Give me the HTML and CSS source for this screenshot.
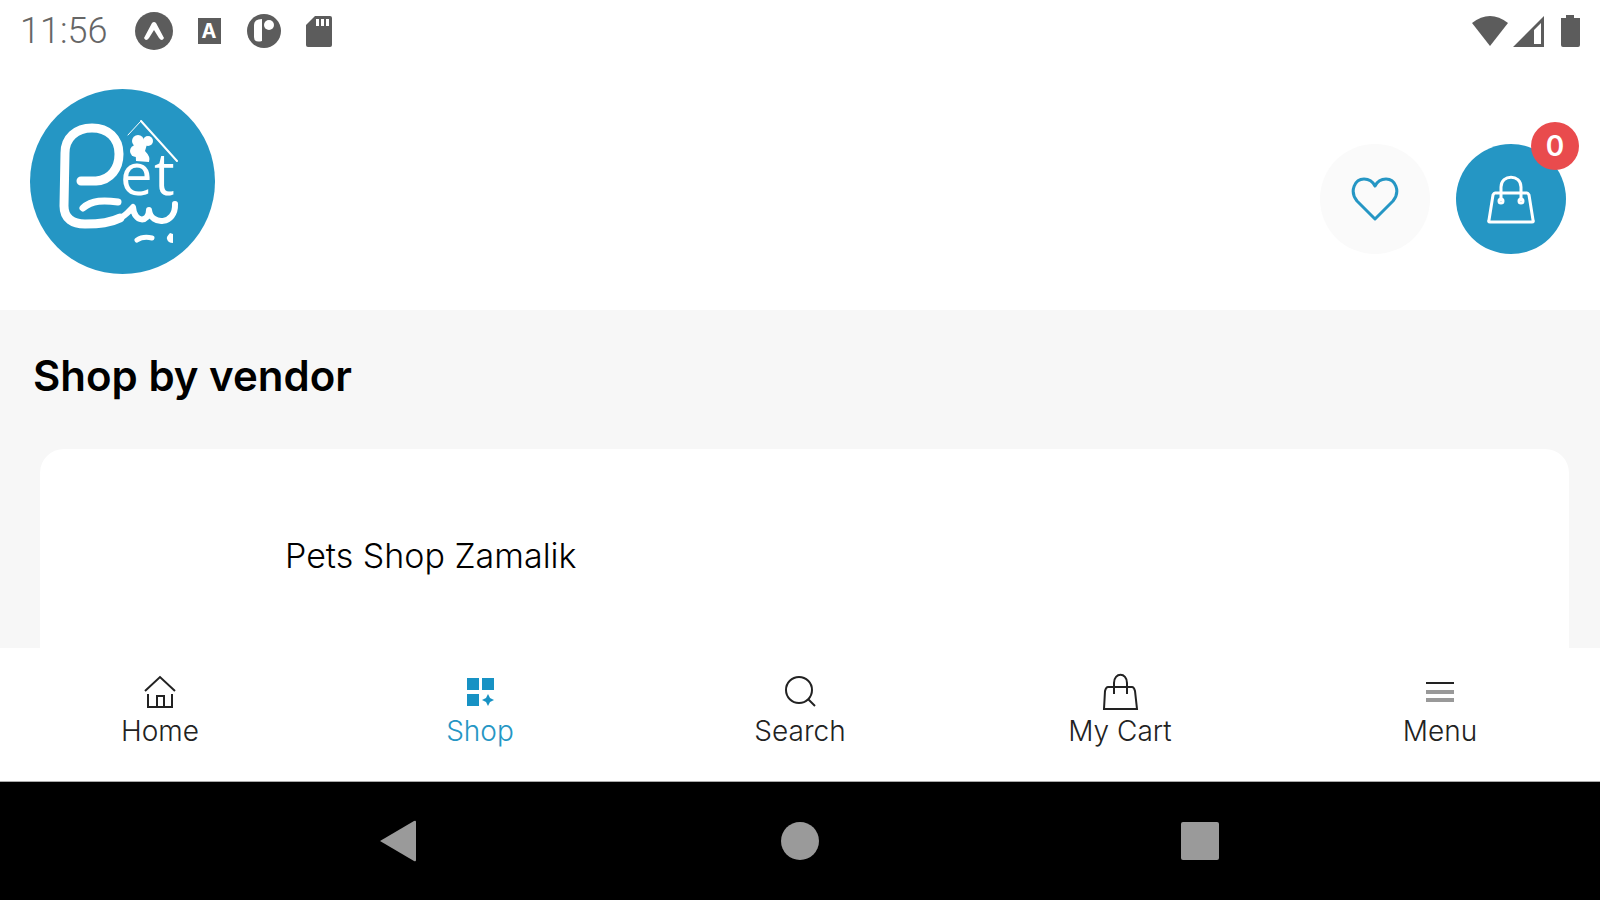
FILE: index.html
```
<!DOCTYPE html>
<html lang="en">
<head>
    <meta charset="UTF-8">
    <meta name="viewport" content="width=device-width, initial-scale=1.0">
    <title>Pet Beit</title>
    <link rel="stylesheet" href="styles.css">
</head>
<body>
    <!-- Status bar -->
    <div class="status-bar">
        <span class="time">11:56</span>
        <div class="status-icons">
            <svg viewBox="0 0 38 38"><circle cx="19" cy="19" r="19"/><path class="cut" d="M9 26L17 11Q19 9 21 11L29 26Q27 30 24 26L19 18L14 26Q11 30 9 26Z"/></svg>
            <svg viewBox="0 0 38 38"><path d="M8 6H31V32H8Z"/><text class="cut icon-letter" x="19" y="26" text-anchor="middle">A</text></svg>
            <svg viewBox="0 0 38 38"><circle cx="19" cy="19" r="17"/><path class="cut" d="M17 7V29Q9 31 9 25V13Q9 7 17 7Z"/><circle class="cut" cx="24" cy="13" r="5"/></svg>
            <svg viewBox="0 0 38 38"><path d="M15 4H30Q32 4 32 6V33Q32 35 30 35H8Q6 35 6 33V13Z"/><path class="cut" d="M16 7H19V14H16ZM21 7H24V14H21ZM26 7H29V14H26Z"/></svg>
        </div>
        <div class="system-icons">
            <svg viewBox="0 0 38 38"><path d="M1 11Q19 -3 37 11L19 34Z"/></svg>
            <svg viewBox="0 0 38 38"><path fill-rule="evenodd" d="M2 35L33 4V35ZM23 18V32H30V11Z"/></svg>
            <svg viewBox="0 0 38 38"><path d="M15 3H23V6H29V33Q29 35 27 35H12Q10 35 10 33V6H15Z"/></svg>
        </div>
    </div>

    <!-- Header -->
    <header class="header">
        <a href="#" class="logo" aria-label="Pet Beit">
            <svg viewBox="0 0 185 185">
                <circle cx="92.5" cy="92.5" r="92.5" fill="#2596c4"/>
                <g fill="none" stroke="#fff" stroke-linecap="round" stroke-linejoin="round">
                    <path stroke-width="9" d="M51 92H66C81 91 89 79 89 65C89 49 78 39 62 39C46 39 35 49 35 64L34 117C34 130 43 135 55 135C70 135 80 134 90 129"/>
                    <path stroke-width="6" d="M88 130C96 127 99 122 103 118C104 134 119 134 119 121C121 137 146 136 145 115"/>
                    <path stroke-width="7" d="M53 119C62 111 74 111 88 113"/>
                    <path stroke-width="5" d="M107 151Q113 147 122 149"/>
                    <path stroke-width="1" d="M98 46L111 32"/>
                    <path stroke-width="2" d="M111 32L147 72"/>
                </g>
                <g fill="#fff">
                    <circle cx="108" cy="52" r="6"/>
                    <circle cx="118" cy="52" r="5"/>
                    <circle cx="106" cy="62" r="6"/>
                    <path d="M105 52H118L115 62Q121 68 119 73L106 72Z"/>
                    <path d="M140 144Q136 148 137 150Q138 154 143 154V145Z"/>
                    <text class="logo-text" x="90 124" y="106">et</text>
                </g>
            </svg>
        </a>
        <div class="actions">
            <button class="round-button" aria-label="Wishlist">
                <svg viewBox="0 0 50 50"><path d="M25 45L7 27C-1 17 5 5 14 5C19 5 23 8 25 12C27 8 31 5 36 5C45 5 51 17 43 27Z"/></svg>
            </button>
            <button class="round-button cart" aria-label="Cart">
                <svg viewBox="0 0 50 50"><path d="M9 19H41Q42 19 43 21L47 46Q48 48 46 48H4Q2 48 3 46L7 21Q8 19 9 19ZM15 27V13C15 0 35 0 35 13V27"/><circle cx="15" cy="27" r="2"/><circle cx="35" cy="27" r="2"/></svg>
                <span class="badge">0</span>
            </button>
        </div>
    </header>

    <!-- Vendors -->
    <main class="content">
        <h1>Shop by vendor</h1>
        <a href="#" class="vendor-card">Pets Shop Zamalik</a>
    </main>

    <!-- Tabs -->
    <nav class="tabs">
        <a href="#" class="tab">
            <svg viewBox="0 0 40 40"><path d="M5 20L20 6L35 20M8 23V36H32V23M17 36V25H24V36"/></svg>
            Home
        </a>
        <a href="#" class="tab active">
            <svg viewBox="0 0 40 40"><path class="solid" d="M7 7H19V19H7ZM22 7H34V19H22ZM7 23H19V35H7ZM28 23L30 27L34 29L30 31L28 35L26 31L22 29L26 27Z"/></svg>
            Shop
        </a>
        <a href="#" class="tab">
            <svg viewBox="0 0 40 40"><circle cx="19" cy="19" r="13"/><path d="M28 28L35 35"/></svg>
            Search
        </a>
        <a href="#" class="tab">
            <svg viewBox="0 0 40 40"><path d="M8 16H32Q34 16 35 20L37 38H4L5 20Q6 16 8 16ZM14 23V12C14 1 27 1 27 12V23"/></svg>
            My Cart
        </a>
        <a href="#" class="tab">
            <svg viewBox="0 0 40 40"><path d="M6 12H34"/><path class="faded" d="M6 21H34M6 29H34"/></svg>
            Menu
        </a>
    </nav>

    <!-- System navigation -->
    <div class="system-nav">
        <button aria-label="Back"><svg viewBox="0 0 44 44"><path d="M2 22L36 2Q38 1 38 3V41Q38 43 36 42Z"/></svg></button>
        <button aria-label="Home screen"><svg viewBox="0 0 44 44"><circle cx="22" cy="22" r="19"/></svg></button>
        <button aria-label="Recent apps"><svg viewBox="0 0 44 44"><rect x="3" y="3" width="38" height="38" rx="2"/></svg></button>
    </div>
</body>
</html>
```

FILE: styles.css
```
* {
    box-sizing: border-box;
}
body {
    margin: 0;
    height: 100vh;
    display: flex;
    flex-direction: column;
    background: white;
    color: black;
    font-family: Inter, "Open Sans", sans-serif;
}
a {
    color: inherit;
    text-decoration: none;
}
button {
    padding: 0;
    border: none;
    background: none;
    font-family: inherit;
    cursor: pointer;
}
svg {
    display: block;
}
.status-bar {
    display: flex;
    align-items: center;
    height: 62px;
    padding: 0 11px 0 20px;
    color: #666;
}
.time {
    font-family: Roboto, sans-serif;
    font-size: 36px;
    font-weight: 300;
    line-height: 40px;
}
.status-bar svg {
    width: 38px;
    height: 38px;
    fill: #5c5c5c;
}
.status-bar .cut {
    fill: white;
}
.icon-letter {
    font-size: 20px;
    font-weight: 700;
}
.status-icons {
    display: flex;
    gap: 17px;
    margin-left: 28px;
}
.system-icons {
    display: flex;
    gap: 2px;
    margin-left: auto;
}
.header {
    display: flex;
    justify-content: space-between;
    align-items: flex-start;
    padding: 27px 34px 36px 30px;
}
.logo svg {
    width: 185px;
    height: 185px;
}
.logo-text {
    font-family: "Open Sans", sans-serif;
    font-size: 58px;
    font-weight: 500;
}
.actions {
    display: flex;
    gap: 26px;
    padding-top: 55px;
}
.round-button {
    position: relative;
    display: flex;
    justify-content: center;
    align-items: center;
    width: 110px;
    height: 110px;
    border-radius: 50%;
    background: #fafafa;
}
.round-button svg {
    width: 50px;
    height: 50px;
    fill: none;
    stroke: #2596c4;
    stroke-width: 3;
    stroke-linejoin: round;
}
.round-button.cart {
    background: #2596c4;
}
.round-button.cart svg {
    stroke: white;
}
.badge {
    position: absolute;
    top: -22px;
    right: -13px;
    width: 48px;
    border-radius: 50%;
    background: #e94b4d;
    color: white;
    font-size: 28px;
    font-weight: 600;
    line-height: 48px;
}
.content {
    flex: 1;
    display: flex;
    flex-direction: column;
    min-height: 0;
    overflow: hidden;
    padding: 40px 31px 0 33px;
    background: #f7f7f7;
}
h1 {
    margin: 0;
    font-size: 42px;
    font-weight: 600;
    line-height: 52px;
}
.vendor-card {
    flex: none;
    margin: 47px 0 0 7px;
    padding: 82px 245px 120px;
    border-radius: 24px;
    background: white;
    font-size: 34px;
    font-weight: 300;
    line-height: 50px;
}
.tabs {
    display: grid;
    grid-template-columns: repeat(5, 1fr);
    padding: 23px 0 30px;
    border-bottom: 1px solid #aaa;
    background: white;
}
.tab {
    display: flex;
    flex-direction: column;
    align-items: center;
    color: #222;
    font-size: 28px;
    font-weight: 300;
    line-height: 40px;
}
.tab svg {
    width: 40px;
    height: 40px;
    fill: none;
    stroke: #222;
    stroke-width: 2;
}
.tab .faded {
    stroke: #999;
    stroke-width: 4;
}
.tab.active {
    color: #2596c4;
}
.tab .solid {
    fill: #1792c4;
    stroke: none;
}
.system-nav {
    display: grid;
    grid-template-columns: repeat(3, 1fr);
    height: 118px;
    padding: 0 12.5%;
    background: black;
}
.system-nav button {
    display: flex;
    justify-content: center;
    align-items: center;
}
.system-nav svg {
    width: 44px;
    height: 44px;
    fill: #9a9a9a;
}
```
